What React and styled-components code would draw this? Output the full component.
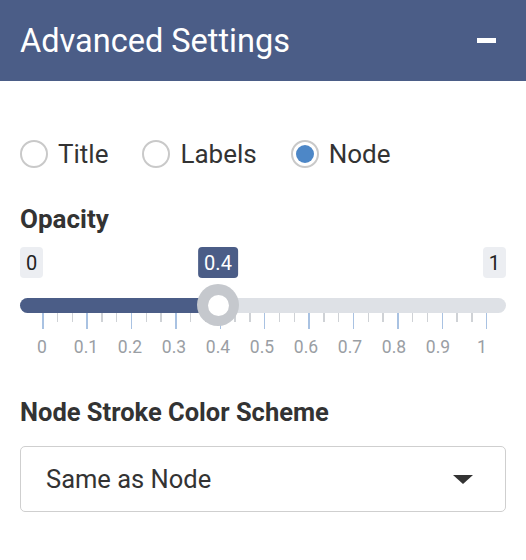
import React from 'react';
import styled, { createGlobalStyle } from 'styled-components';

const GlobalStyle = createGlobalStyle`
  body {
    margin: 0;
    background: #fff;
    font-family: Roboto, "Liberation Sans", sans-serif;
    color: #333;
  }
`;

const Panel = styled.div`
  width: 526px;
  height: 560px;
  background: #fff;
`;

const Header = styled.div`
  height: 81px;
  background: #4b5d87;
  display: flex;
  align-items: center;
  justify-content: space-between;
  padding: 0 30px 0 20px;
  box-sizing: border-box;
`;

const HeaderTitle = styled.h2`
  margin: 0;
  font-size: 32.5px;
  font-weight: 400;
  color: #fff;
`;

const Minus = styled.span`
  display: block;
  width: 19px;
  height: 5px;
  background: #fff;
`;

const Body = styled.div`
  padding: 59px 20px 0 20px;
`;

const RadioGroup = styled.div`
  display: flex;
  align-items: center;
  gap: 34px;
`;

const RadioItem = styled.label`
  display: flex;
  align-items: center;
  gap: 10px;
  font-size: 26px;
  color: #333;
  line-height: 28px;
`;

const RadioCircle = styled.span`
  width: 28px;
  height: 28px;
  box-sizing: border-box;
  border: 2px solid #c9c9c9;
  border-radius: 50%;
  display: flex;
  align-items: center;
  justify-content: center;

  &::after {
    content: '';
    width: 18px;
    height: 18px;
    border-radius: 50%;
    background: ${(p) => (p.$checked ? '#4d87c7' : 'transparent')};
  }
`;

const FieldLabel = styled.div`
  font-size: ${(p) => p.$size}px;
  font-weight: 700;
  color: #333;
  line-height: 24px;
  margin-top: ${(p) => p.$top}px;
`;

const Slider = styled.div`
  display: flex;
  flex-direction: column;
  margin-top: 16px;
`;

const BubbleRow = styled.div`
  position: relative;
  display: flex;
  justify-content: space-between;
`;

const Bubble = styled.span`
  height: 31px;
  padding: 0 6px;
  box-sizing: border-box;
  border-radius: 4px;
  display: flex;
  align-items: center;
  font-size: 20px;
  background: #eceef2;
  color: #222;
`;

const ValueBubble = styled(Bubble)`
  position: absolute;
  top: 0;
  transform: translateX(-50%);
  background: #4b5d87;
  color: #fff;
`;

const Track = styled.div`
  position: relative;
  margin-top: 20px;
  height: 15px;
  border-radius: 8px;
  background: #dee1e6;
`;

const Fill = styled.div`
  height: 100%;
  border-radius: 8px 0 0 8px;
  background: #4b5d87;
`;

const Handle = styled.div`
  position: absolute;
  top: -14px;
  width: 42px;
  height: 42px;
  margin-left: -21px;
  border-radius: 50%;
  background: #c5c8cd;
  display: flex;
  align-items: center;
  justify-content: center;

  &::after {
    content: '';
    width: 21px;
    height: 21px;
    border-radius: 50%;
    background: #fff;
  }
`;

const TickRow = styled.div`
  display: flex;
  justify-content: space-between;
  align-items: flex-start;
  padding: 0 18.5px 0 22px;
  height: 16px;
`;

const Tick = styled.span`
  width: 1.5px;
  height: ${(p) => (p.$major ? 16 : 9)}px;
  background: ${(p) => (p.$major ? '#a9c2e2' : '#cfd2d6')};
`;

const LabelRow = styled.div`
  display: flex;
  margin-top: 8px;
`;

const TickLabel = styled.span`
  width: 44px;
  text-align: center;
  font-size: 17.5px;
  color: #9a9ea4;
`;

const Select = styled.div`
  margin-top: 22px;
  height: 66px;
  box-sizing: border-box;
  border: 1.5px solid #cfcfcf;
  border-radius: 5px;
  display: flex;
  align-items: center;
  justify-content: space-between;
  padding: 0 32px 0 25px;
  font-size: 25.5px;
  color: #333;
`;

const Caret = styled.span`
  width: 0;
  height: 0;
  border-left: 10px solid transparent;
  border-right: 10px solid transparent;
  border-top: 9px solid #333;
`;

const START = 22;
const SPAN = 440;
const value = 0.4;

const Opacity = () => {
  const pos = START + SPAN * value;
  const ticks = Array.from({ length: 31 }, (_, i) => i);
  const labels = Array.from({ length: 11 }, (_, i) => (i === 0 ? '0' : i === 10 ? '1' : '0.' + i));
  return (
    <Slider>
      <BubbleRow>
        <Bubble>0</Bubble>
        <ValueBubble style={{ left: pos }}>0.4</ValueBubble>
        <Bubble>1</Bubble>
      </BubbleRow>
      <Track>
        <Fill style={{ width: pos }} />
        <Handle style={{ left: pos }} />
      </Track>
      <TickRow>
        {ticks.map((i) => (
          <Tick key={i} $major={i % 3 === 0} />
        ))}
      </TickRow>
      <LabelRow>
        {labels.map((l) => (
          <TickLabel key={l}>{l}</TickLabel>
        ))}
      </LabelRow>
    </Slider>
  );
};

export default function App() {
  return (
    <Panel>
      <GlobalStyle />
      <Header>
        <HeaderTitle>Advanced Settings</HeaderTitle>
        <Minus />
      </Header>
      <Body>
        <RadioGroup>
          <RadioItem><RadioCircle />Title</RadioItem>
          <RadioItem><RadioCircle />Labels</RadioItem>
          <RadioItem><RadioCircle $checked />Node</RadioItem>
        </RadioGroup>
        <FieldLabel $top={39} $size={26}>Opacity</FieldLabel>
        <Opacity />
        <FieldLabel $top={43} $size={25.5}>Node Stroke Color Scheme</FieldLabel>
        <Select>
          Same as Node
          <Caret />
        </Select>
      </Body>
    </Panel>
  );
}
